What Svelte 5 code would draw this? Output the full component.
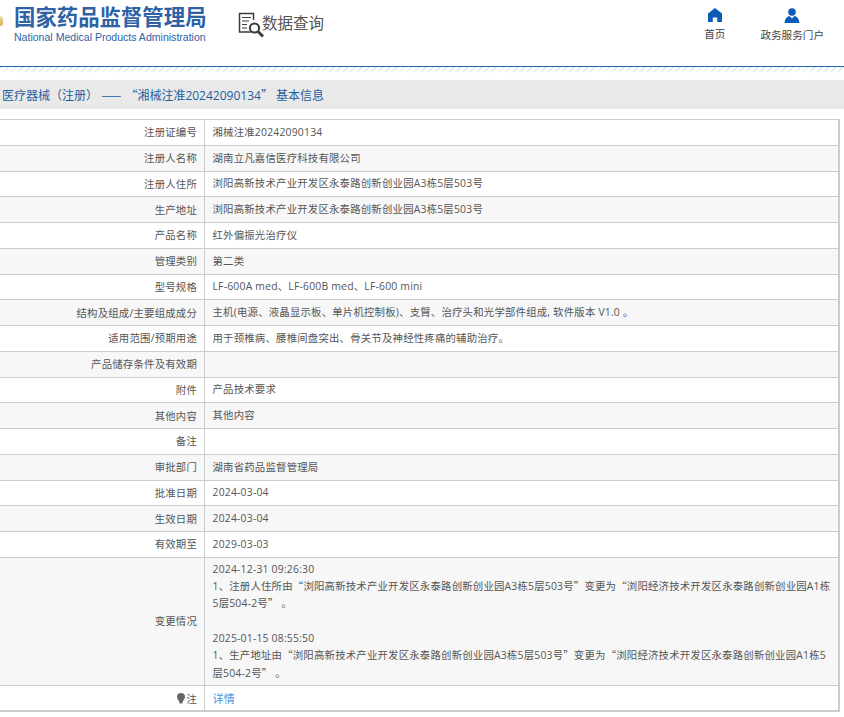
<script>
  const rows = [
    ['注册证编号', '湘械注准20242090134'],
    ['注册人名称', '湖南立凡嘉信医疗科技有限公司'],
    ['注册人住所', '浏阳高新技术产业开发区永泰路创新创业园A3栋5层503号'],
    ['生产地址', '浏阳高新技术产业开发区永泰路创新创业园A3栋5层503号'],
    ['产品名称', '红外偏振光治疗仪'],
    ['管理类别', '第二类'],
    ['型号规格', 'LF-600A med、LF-600B med、LF-600 mini'],
    ['结构及组成/主要组成成分', '主机(电源、液晶显示板、单片机控制板)、支臂、治疗头和光学部件组成, 软件版本 V1.0 。'],
    ['适用范围/预期用途', '用于颈椎病、腰椎间盘突出、骨关节及神经性疼痛的辅助治疗。'],
    ['产品储存条件及有效期', ''],
    ['附件', '产品技术要求'],
    ['其他内容', '其他内容'],
    ['备注', ''],
    ['审批部门', '湖南省药品监督管理局'],
    ['批准日期', '2024-03-04'],
    ['生效日期', '2024-03-04'],
    ['有效期至', '2029-03-03']
  ];
</script>

<div class="page">
  <header class="top">
    <div class="emblem"></div>
    <div class="brand">
      <div class="cn">国家药品监督管理局</div>
      <div class="en">National Medical Products Administration</div>
    </div>
    <div class="query">
      <svg width="26" height="26" viewBox="0 0 26 26" fill="none" stroke="#3c3c3c" stroke-width="1.5">
        <path d="M13 20H1.5V1.5H15.5V8" />
        <path d="M4 5.5h9M4 9h7M4 12.5h5M4 16h5" stroke-width="1.2" />
        <circle cx="16.5" cy="16" r="4.6" stroke-width="2" />
        <path d="M20 19.5L25 24.5" stroke-width="2.8" />
      </svg>
      <span>数据查询</span>
    </div>
    <nav class="nav">
      <div class="nav-item">
        <svg width="16" height="14" viewBox="0 0 16 14"><path fill="#0a5cb8" d="M8 0L15 5.5V14H10.2V9.5H5.8V14H1V5.5Z" /></svg>
        <span>首页</span>
      </div>
      <div class="nav-item">
        <svg width="16" height="15" viewBox="0 0 16 15"><circle cx="8" cy="4" r="3.8" fill="#0a5cb8" /><path fill="#0a5cb8" d="M0.5 15C1 10.5 3 8.6 5.5 8L8 10.5L10.5 8C13 8.6 15 10.5 15.5 15Z" /></svg>
        <span>政务服务门户</span>
      </div>
    </nav>
  </header>

  <div class="hatch"></div>
  <div class="title">医疗器械（注册） <span class="q dash">——</span> <span class="q">“</span>湘械注准20242090134<span class="q">”</span> 基本信息</div>

  <table>
    <tbody>
      {#each rows as [k, v], i}
        <tr class:alt={i % 2 === 1}>
          <th>{k}</th>
          <td>{v}</td>
        </tr>
      {/each}
      <tr class="alt change">
        <th>变更情况</th>
        <td>
          <p>2024-12-31 09:26:30</p>
          <p>1、注册人住所由<span class="q">“</span>浏阳高新技术产业开发区永泰路创新创业园A3栋5层503号<span class="q">”</span>变更为<span class="q">“</span>浏阳经济技术开发区永泰路创新创业园A1栋5层504-2号<span class="q">”</span> 。</p>
          <p class="gap"></p>
          <p>2025-01-15 08:55:50</p>
          <p>1、生产地址由<span class="q">“</span>浏阳高新技术产业开发区永泰路创新创业园A3栋5层503号<span class="q">”</span>变更为<span class="q">“</span>浏阳经济技术开发区永泰路创新创业园A1栋5层504-2号<span class="q">”</span> 。</p>
        </td>
      </tr>
      <tr class="last">
        <th><svg class="pin" width="8" height="11" viewBox="0 0 8 11"><path fill="#666" d="M4 0a4 4 0 0 1 4 4c0 2-2 3-2.6 6.5H2.6C2 7 0 6 0 4a4 4 0 0 1 4-4Z" /></svg>注</th>
        <td><span class="link">详情</span></td>
      </tr>
    </tbody>
  </table>
</div>

<style>
  :global(body) {
    margin: 0;
    background: #fff;
    font-family: "Open Sans", "Noto Sans CJK SC", sans-serif;
  }
  .page {
    width: 844px;
    height: 717px;
    overflow: hidden;
  }
  .top {
    height: 66px;
    display: flex;
    align-items: flex-start;
    border-bottom: 1px solid #1f68a8;
  }
  .emblem {
    width: 3px;
    height: 10px;
    margin: 16px 11px 0 0;
    background: linear-gradient(#f3dfae, #d9a94e);
    border-radius: 0 5px 5px 0;
  }
  .brand {
    width: 210px;
    padding-top: 3px;
  }
  .cn {
    font-family: "Noto Sans CJK SC", sans-serif;
    font-size: 21.4px;
    line-height: 26px;
    font-weight: 700;
    color: #2f62a5;
  }
  .en {
    font-family: "Liberation Sans", sans-serif;
    font-size: 10.55px;
    line-height: 14px;
    color: #2f62a5;
    margin-top: 1px;
  }
  .query {
    display: flex;
    align-items: flex-start;
    margin-left: 14px;
    margin-top: 12px;
    font-family: "Noto Sans CJK SC", sans-serif;
    font-size: 15.5px;
    line-height: 26px;
    color: #555;
  }
  .query span {
    margin: -3px 0 0 -2px;
  }
  .nav {
    display: flex;
    margin-left: auto;
    margin-right: 20px;
    gap: 35px;
    padding-top: 8px;
  }
  .nav-item {
    display: flex;
    flex-direction: column;
    align-items: center;
    font-family: "Noto Sans CJK SC", sans-serif;
    font-size: 10.6px;
    line-height: 16px;
    color: #444;
    gap: 4px;
  }
  .hatch {
    height: 13px;
    background:
      linear-gradient(transparent 3px, #fff 6px),
      repeating-linear-gradient(135deg, #e4edf3 0 2px, #fff 2px 5px);
  }
  .title {
    height: 29px;
    line-height: 32px;
    background: #e9e9e9;
    color: #1d5fa0;
    font-size: 12px;
    padding-left: 2px;
    margin-bottom: 10px;
    white-space: nowrap;
  }
  .q {
    font-family: "Noto Sans CJK SC", sans-serif;
    line-height: 0;
  }
  .dash {
    letter-spacing: 1px;
  }
  table {
    width: 840px;
    border-collapse: collapse;
    table-layout: fixed;
    font-size: 10.4px;
    letter-spacing: 0.2px;
    color: #555;
    border-bottom: 2px solid #ccc;
    border-right: 2px solid #ccc;
  }
  tr {
    height: 25.75px;
    border-top: 1px solid #ccc;
  }
  .alt {
    background: #f7f7f7;
  }
  th {
    width: 197px;
    padding: 0 7px 1px 0;
    text-align: right;
    font-weight: 400;
    border-right: 1px solid #ccc;
    white-space: nowrap;
  }
  td {
    padding: 0 8px 1px 7.5px;
    line-height: 16px;
  }
  p {
    margin: 0;
    line-height: 17.3px;
  }
  .change td {
    padding: 3px 5px 3px 7.5px;
  }
  .gap {
    height: 17.3px;
  }
  .last {
    height: 26px;
  }
  .last th,
  .last td {
    padding-top: 1px;
    padding-bottom: 0;
  }
  .pin {
    margin-right: 1px;
    vertical-align: -1px;
  }
  .link {
    color: #4a94dc;
    font-size: 11px;
  }
</style>
